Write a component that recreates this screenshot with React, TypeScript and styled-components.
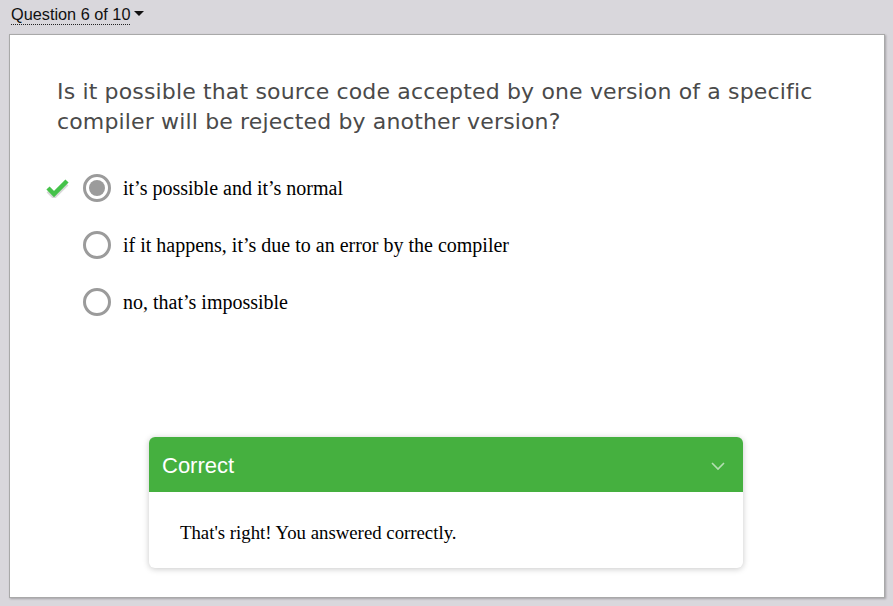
import styled, { createGlobalStyle } from "styled-components";

const GlobalStyle = createGlobalStyle`
  html, body {
    margin: 0;
    padding: 0;
    background: #d9d7dc;
    height: 100%;
  }
  #root {
    height: 100%;
  }
`;

const Page = styled.div`
  height: 606px;
  display: flex;
  flex-direction: column;
  padding: 0 8px 8px 9px;
  box-sizing: border-box;
`;

const TopBar = styled.div`
  height: 34px;
  display: flex;
  align-items: flex-start;
  padding-top: 5px;
  padding-left: 2px;
  box-sizing: border-box;
`;

const QuestionPicker = styled.button`
  border: none;
  background: none;
  padding: 0;
  display: flex;
  align-items: center;
  gap: 4px;
  font-family: "Liberation Sans", Arial, sans-serif;
  font-size: 16.3px;
  color: #111;
  cursor: pointer;
`;

const PickerLabel = styled.span`
  border-bottom: 1px dotted #222;
  line-height: 19px;
`;

const Caret = styled.span`
  width: 0;
  height: 0;
  border-left: 5px solid transparent;
  border-right: 5px solid transparent;
  border-top: 5px solid #111;
  margin-top: -3px;
`;

const Card = styled.div`
  flex: 1;
  background: #fff;
  border: 1px solid #a9a9a9;
  box-shadow: 1px 1px 2px rgba(0, 0, 0, 0.25);
  display: flex;
  flex-direction: column;
  padding: 42px 0 0 0;
  box-sizing: border-box;
`;

const QuestionText = styled.h2`
  margin: 0 0 0 47px;
  font-family: "DejaVu Sans", Verdana, sans-serif;
  font-weight: normal;
  font-size: 22px;
  letter-spacing: 0.15px;
  line-height: 30px;
  color: #4a4a4a;
  max-width: 790px;
`;

const Options = styled.ul`
  list-style: none;
  margin: 37px 0 0 0;
  padding: 0 0 0 36px;
  display: flex;
  flex-direction: column;
  gap: 29px;
`;

const Option = styled.li`
  display: flex;
  align-items: center;
  height: 28px;
`;

const Mark = styled.span`
  width: 24px;
  height: 20px;
  margin-right: 13px;
  display: flex;
  align-items: center;
  justify-content: center;
`;

const Radio = styled.span<{ $checked?: boolean }>`
  width: 28px;
  height: 28px;
  border-radius: 50%;
  border: 3px solid #9b9b9b;
  box-sizing: border-box;
  display: flex;
  align-items: center;
  justify-content: center;
  margin-right: 12px;
  &::after {
    content: "";
    width: 16px;
    height: 16px;
    border-radius: 50%;
    background: ${(p) => (p.$checked ? "#9b9b9b" : "transparent")};
  }
`;

const OptionLabel = styled.span`
  font-family: "Liberation Serif", "Times New Roman", serif;
  font-size: 20px;
  color: #000;
`;

const Spacer = styled.div`
  flex: 1;
`;

const Feedback = styled.div`
  margin: 0 0 29px 139px;
  width: 594px;
  border-radius: 6px;
  background: #fff;
  box-shadow: 0 1px 6px rgba(0, 0, 0, 0.22);
  overflow: hidden;
`;

const FeedbackHeader = styled.div`
  height: 55px;
  background: #45b03f;
  display: flex;
  align-items: center;
  justify-content: space-between;
  padding: 3px 18px 0 13px;
  box-sizing: border-box;
  color: #fff;
  font-family: "Liberation Sans", Arial, sans-serif;
  font-size: 22px;
`;

const FeedbackBody = styled.div`
  height: 76px;
  display: flex;
  align-items: center;
  padding: 5px 0 0 31px;
  box-sizing: border-box;
  font-family: "Liberation Serif", "Times New Roman", serif;
  font-size: 18.8px;
  color: #000;
`;

const CheckIcon = () => (
  <svg width="24" height="20" viewBox="0 0 24 20">
    <path d="M2 11 L8 17 L21 4" fill="none" stroke="#d8d8d8" strokeWidth="4" transform="translate(0 2)" />
    <path d="M2 10 L8 16 L21 3" fill="none" stroke="#45c24a" strokeWidth="4.5" />
  </svg>
);

const Chevron = () => (
  <svg width="14" height="9" viewBox="0 0 14 9">
    <path d="M1 1 L7 7 L13 1" fill="none" stroke="rgba(255,255,255,0.6)" strokeWidth="1.6" />
  </svg>
);

const options = [
  { label: "it\u2019s possible and it\u2019s normal", checked: true },
  { label: "if it happens, it\u2019s due to an error by the compiler", checked: false },
  { label: "no, that\u2019s impossible", checked: false },
];

export default function App() {
  return (
    <>
      <GlobalStyle />
      <Page>
        <TopBar>
          <QuestionPicker>
            <PickerLabel>Question 6 of 10</PickerLabel>
            <Caret />
          </QuestionPicker>
        </TopBar>
        <Card>
          <QuestionText>
            Is it possible that source code accepted by one version of a specific compiler will be
            rejected by another version?
          </QuestionText>
          <Options>
            {options.map((o, i) => (
              <Option key={i}>
                <Mark>{o.checked && <CheckIcon />}</Mark>
                <Radio $checked={o.checked} />
                <OptionLabel>{o.label}</OptionLabel>
              </Option>
            ))}
          </Options>
          <Spacer />
          <Feedback>
            <FeedbackHeader>
              <span>Correct</span>
              <Chevron />
            </FeedbackHeader>
            <FeedbackBody>That's right! You answered correctly.</FeedbackBody>
          </Feedback>
        </Card>
      </Page>
    </>
  );
}
